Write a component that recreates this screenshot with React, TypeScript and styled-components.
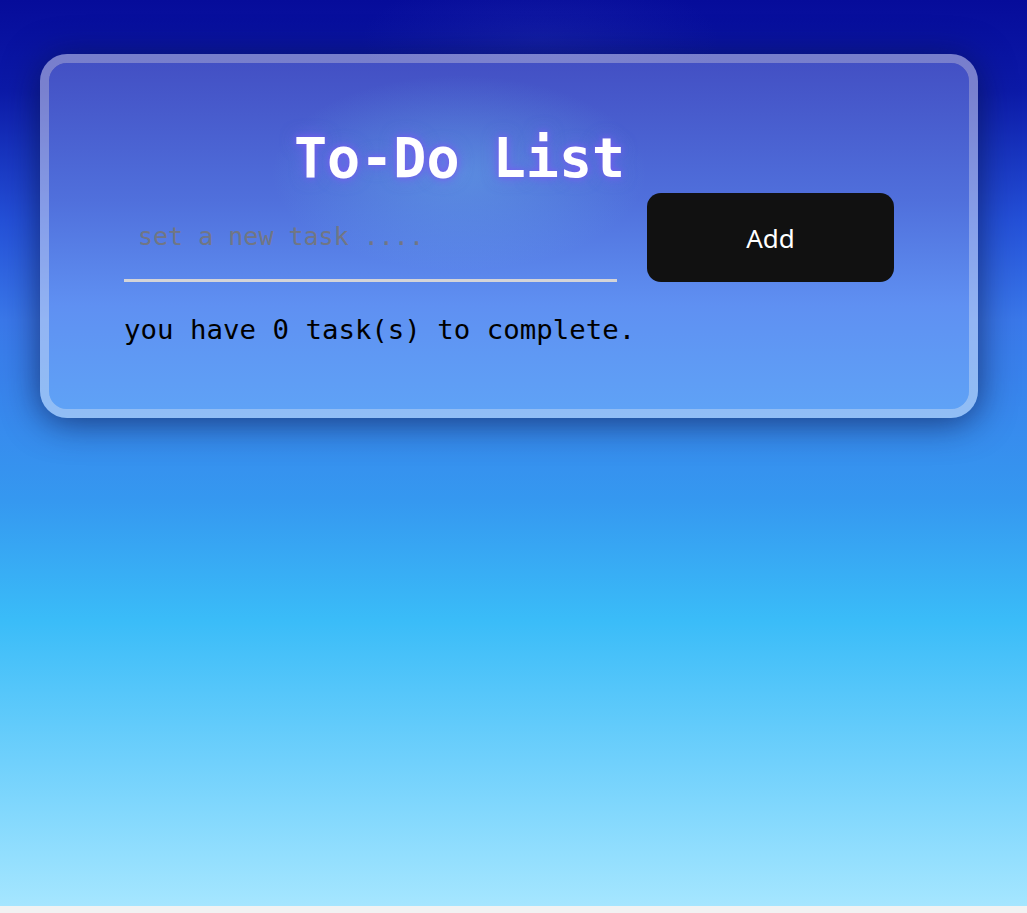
import { useState } from "react";
import { createGlobalStyle, styled } from "styled-components";

const GlobalStyle = createGlobalStyle`
  html {
    background: #f2f2f2;
  }
  body {
    margin: 0;
    font-family: "DejaVu Sans Mono", monospace;
  }
  * {
    box-sizing: border-box;
  }
`;

const Page = styled.div`
  height: 906px;
  padding: 54px 49px 0 40px;
  background:
    radial-gradient(ellipse 240px 90px at 540px 40px, rgba(90, 110, 210, 0.12), transparent 75%),
    linear-gradient(
      180deg,
      #060c9a 0px,
      #0c1aa8 90px,
      #2450d8 220px,
      #3a78ea 320px,
      #3598f0 500px,
      #3abcf8 620px,
      #6fd0fc 760px,
      #a5e6ff 906px
    );
`;

const Card = styled.div`
  border: 9px solid rgba(255, 255, 255, 0.45);
  border-radius: 27px;
  background:
    radial-gradient(ellipse 250px 130px at 410px 110px, rgba(110, 190, 235, 0.4), transparent 75%),
    linear-gradient(180deg, #4350c4 0%, #5070dc 40%, #5f90f2 70%, #5fa2f6 100%);
  background-clip: padding-box;
  box-shadow: 0 4px 36px rgba(10, 20, 70, 0.7);
  padding: 59px 75px 62px 75px;
  display: flex;
  flex-direction: column;
`;

const Title = styled.h1`
  margin: 3px 0 1px 0;
  padding-left: 170px;
  font-family: "DejaVu Sans Mono", monospace;
  font-weight: bold;
  font-size: 55px;
  line-height: 66px;
  color: #ffffff;
  text-shadow: 0 0 6px rgba(120, 90, 240, 1), 0 0 16px rgba(120, 100, 240, 0.7);
`;

const Row = styled.form`
  display: flex;
  align-items: flex-end;
  gap: 30px;
`;

const Input = styled.input`
  width: 493px;
  height: 90px;
  padding: 2px 14px 0 14px;
  border: none;
  border-bottom: 3px solid #d4d4d8;
  background: transparent;
  outline: none;
  font-family: "DejaVu Sans Mono", monospace;
  font-size: 25px;
  color: #111;
  &::placeholder {
    color: #717684;
  }
`;

const Button = styled.button`
  width: 247px;
  height: 89px;
  border: none;
  border-radius: 14px;
  background: #111111;
  color: #ffffff;
  font-family: "Noto Sans", sans-serif;
  font-size: 26px;
  cursor: pointer;
  &:hover {
    opacity: 0.9;
  }
`;

const Count = styled.p`
  margin: 31px 0 0 0;
  font-family: "DejaVu Sans Mono", monospace;
  font-size: 27.4px;
  line-height: 34px;
  color: #000;
`;

export default function App() {
  const [task, setTask] = useState("");
  const [tasks, setTasks] = useState<string[]>([]);

  const onSubmit = (e: React.FormEvent<HTMLFormElement>) => {
    e.preventDefault();
    if (task.trim() === "") return;
    setTasks([...tasks, task]);
    setTask("");
  };

  return (
    <>
      <GlobalStyle />
      <Page>
        <Card>
          <Title>To-Do List</Title>
          <Row onSubmit={onSubmit}>
            <Input
              value={task}
              onChange={(e) => setTask(e.target.value)}
              placeholder="set a new task ...."
            />
            <Button type="submit">Add</Button>
          </Row>
          <Count>you have {tasks.length} task(s) to complete.</Count>
        </Card>
      </Page>
    </>
  );
}
